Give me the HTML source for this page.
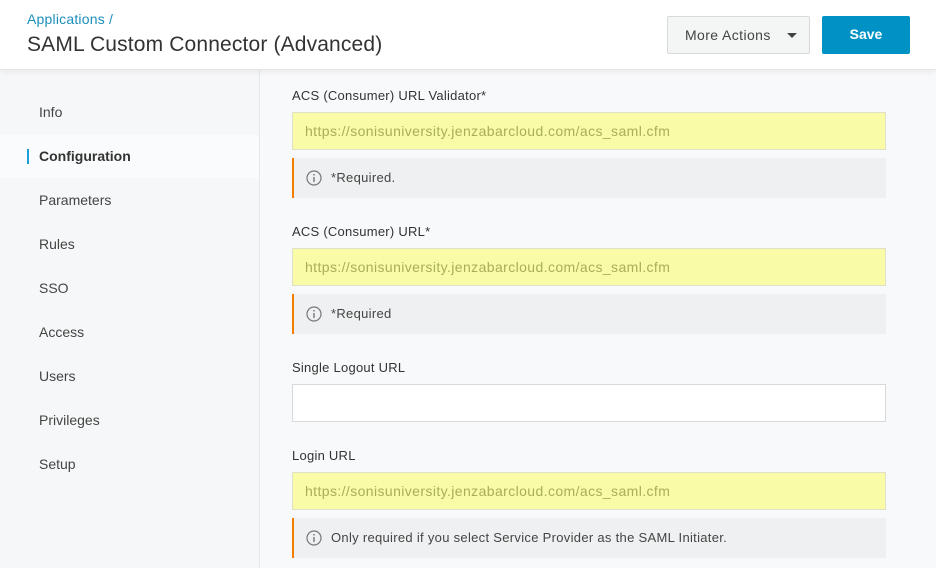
<!DOCTYPE html>
<html><head><style>
*{box-sizing:border-box;margin:0;padding:0}
body{width:936px;height:568px;overflow:hidden;font-family:"Liberation Sans",Roboto,sans-serif;background:#f8f9fa;position:relative}
.hdr{position:absolute;left:0;top:0;width:936px;height:70px;background:#fff;border-bottom:1px solid #e4e6e8;box-shadow:0 2px 6px rgba(0,0,0,.06);z-index:2}
.crumb{position:absolute;left:27px;top:11px;font-size:14px;color:#1a8fba;letter-spacing:.2px}
.title{position:absolute;left:27px;top:33px;font-size:21px;color:#333;letter-spacing:.15px}
.more{position:absolute;left:667px;top:16px;width:143px;height:38px;border:1px solid #d7d9db;border-radius:2px;background:#f4f5f5;font-size:14px;color:#444;letter-spacing:.4px;line-height:36px;padding-left:17px}
.more:after{content:"";position:absolute;left:119px;top:16px;border:5px solid transparent;border-top:5px solid #444}
.save{position:absolute;left:822px;top:16px;width:88px;height:38px;border-radius:2px;background:#0092c4;color:#fff;font-weight:bold;font-size:14px;text-align:center;line-height:36px}
.side{position:absolute;left:0;top:70px;width:260px;height:498px;background:#f6f7f8;border-right:1px solid #e6e8ea}
.side div{position:absolute;left:39px;font-size:14px;color:#444}
.act{position:absolute;left:0;top:65px;width:259px;height:43px;background:#fafbfc}
.bar{position:absolute;left:27px;top:149px;width:2px;height:15px;background:#1a9fd6}
.lbl{position:absolute;left:292px;font-size:13px;color:#333;letter-spacing:.25px}
.in{position:absolute;left:292px;width:594px;height:38px;background:#f9fba6;border:1px solid #dfe0c8;font-size:14px;color:#a8ae5a;padding-left:12px;line-height:36px;letter-spacing:.4px}
.in.w{background:#fff;border-color:#d7d9db}
.note{position:absolute;left:292px;width:594px;height:40px;background:#eff0f1;border-left:2px solid #f27b00;font-size:13px;color:#444;padding-left:37px;line-height:40px;letter-spacing:.3px}
.note svg{position:absolute;left:12px;top:12px}
</style></head><body>
<div class="hdr">
<div class="crumb">Applications /</div>
<div class="title">SAML Custom Connector (Advanced)</div>
<div class="more">More Actions</div>
<div class="save">Save</div>
</div>
<div class="side">
<div class="act" style="left:0"></div>
<div style="top:34px">Info</div>
<div style="top:78px;font-weight:bold;color:#333">Configuration</div>
<div style="top:122px">Parameters</div>
<div style="top:166px">Rules</div>
<div style="top:210px">SSO</div>
<div style="top:254px">Access</div>
<div style="top:298px">Users</div>
<div style="top:342px">Privileges</div>
<div style="top:386px">Setup</div>
</div>
<div class="bar"></div>
<div class="lbl" style="top:88px">ACS (Consumer) URL Validator*</div>
<div class="in" style="top:112px">https://sonisuniversity.jenzabarcloud.com/acs_saml.cfm</div>
<div class="note" style="top:158px"><svg width="16" height="16" viewBox="0 0 16 16"><circle cx="8" cy="8" r="7" fill="none" stroke="#777" stroke-width="1.2"/><rect x="7.3" y="7" width="1.4" height="5" fill="#777"/><rect x="7.3" y="4" width="1.4" height="1.5" fill="#777"/></svg>*Required.</div>
<div class="lbl" style="top:224px">ACS (Consumer) URL*</div>
<div class="in" style="top:248px">https://sonisuniversity.jenzabarcloud.com/acs_saml.cfm</div>
<div class="note" style="top:294px"><svg width="16" height="16" viewBox="0 0 16 16"><circle cx="8" cy="8" r="7" fill="none" stroke="#777" stroke-width="1.2"/><rect x="7.3" y="7" width="1.4" height="5" fill="#777"/><rect x="7.3" y="4" width="1.4" height="1.5" fill="#777"/></svg>*Required</div>
<div class="lbl" style="top:360px">Single Logout URL</div>
<div class="in w" style="top:384px"></div>
<div class="lbl" style="top:448px">Login URL</div>
<div class="in" style="top:472px">https://sonisuniversity.jenzabarcloud.com/acs_saml.cfm</div>
<div class="note" style="top:518px"><svg width="16" height="16" viewBox="0 0 16 16"><circle cx="8" cy="8" r="7" fill="none" stroke="#777" stroke-width="1.2"/><rect x="7.3" y="7" width="1.4" height="5" fill="#777"/><rect x="7.3" y="4" width="1.4" height="1.5" fill="#777"/></svg>Only required if you select Service Provider as the SAML Initiater.</div>
</body></html>
